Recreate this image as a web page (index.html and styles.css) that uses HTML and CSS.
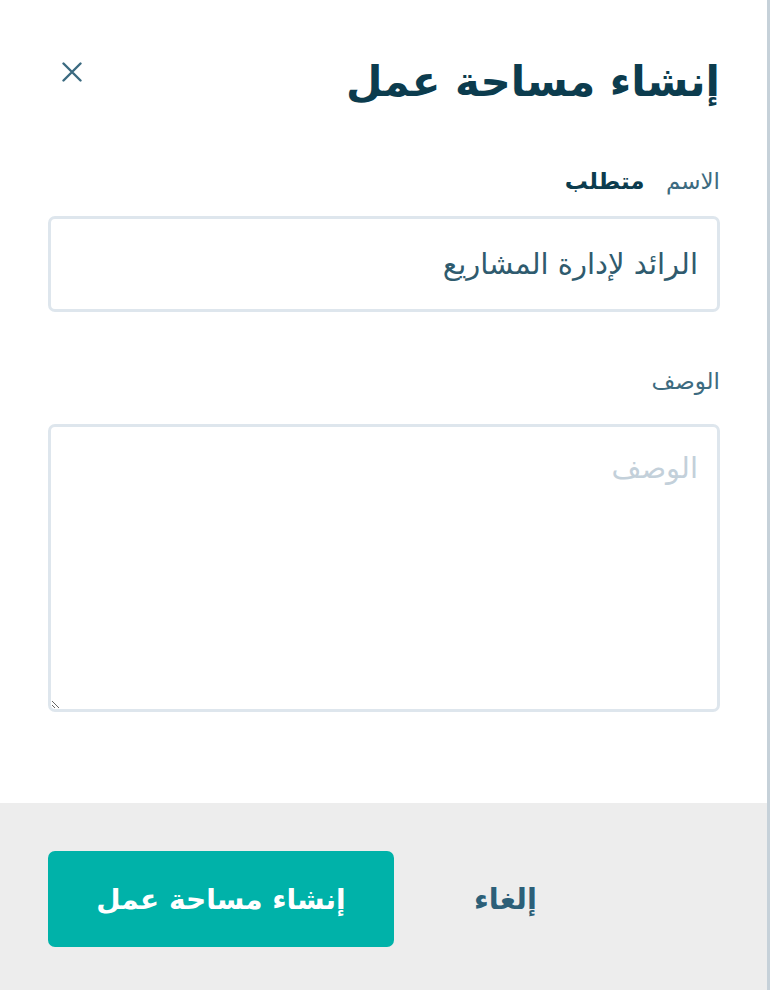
FILE: index.html
```html
<!DOCTYPE html>
<html lang="ar">
<head>
    <meta charset="UTF-8">
    <meta name="viewport" content="width=device-width, initial-scale=1.0">
    <title>إنشاء مساحة عمل</title>
    <link rel="stylesheet" href="styles.css">
</head>
<body>
    <div class="modal" dir="rtl">
        <div class="modal-body">
            <div class="modal-header">
                <h1 class="modal-title">إنشاء مساحة عمل</h1>
                <button class="close-btn" type="button" aria-label="إغلاق">
                    <svg width="20" height="20" viewBox="0 0 20 20">
                        <path d="M1.5 1.5 L18.5 18.5 M18.5 1.5 L1.5 18.5" stroke="#3b6a80" stroke-width="2.4" stroke-linecap="round"/>
                    </svg>
                </button>
            </div>

            <form id="workspaceForm">
                <label for="name" class="field-label">الاسم <span class="required">متطلب</span></label>
                <input type="text" id="name" class="field-input" value="الرائد لإدارة المشاريع">

                <label for="description" class="field-label desc-label">الوصف</label>
                <textarea id="description" class="field-textarea" placeholder="الوصف"></textarea>
            </form>
        </div>

        <div class="modal-footer">
            <button type="button" class="cancel-btn">إلغاء</button>
            <button type="submit" class="submit-btn" form="workspaceForm">إنشاء مساحة عمل</button>
        </div>
    </div>
    <div class="page-edge"></div>
</body>
</html>
```

FILE: styles.css
```css
body {
    margin: 0;
    font-family: "DejaVu Sans", "Noto Sans", sans-serif;
    background-color: #c6d1d9;
    display: flex;
    height: 990px;
    overflow: hidden;
}
.modal {
    width: 767px;
    height: 990px;
    flex-shrink: 0;
    background: #fff;
    display: flex;
    flex-direction: column;
}
.modal-body {
    flex: 1;
    padding: 58px 47px 0 48px;
}
.modal-header {
    display: flex;
    justify-content: space-between;
    align-items: center;
    height: 46px;
    margin-bottom: 64px;
}
.modal-title {
    margin: 0;
    font-size: 42px;
    font-weight: bold;
    color: #0c3c4e;
}
.close-btn {
    background: none;
    border: none;
    padding: 0;
    margin-left: 14px;
    margin-top: -18px;
    cursor: pointer;
    display: flex;
}
.field-label {
    display: block;
    height: 27px;
    font-size: 23px;
    color: #3d6b80;
    margin-bottom: 21px;
}
.required {
    font-weight: bold;
    color: #0c3c4e;
    margin-right: 14px;
}
.field-input,
.field-textarea {
    display: block;
    width: 100%;
    box-sizing: border-box;
    border: 3px solid #dee6ed;
    border-radius: 7px;
    font-family: inherit;
    font-size: 29px;
    color: #2f5b6e;
    padding: 0 19px;
    outline: none;
}
.field-input {
    height: 96px;
}
.desc-label {
    margin-top: 56px;
    margin-bottom: 29px;
}
.field-textarea {
    height: 288px;
    padding-top: 24px;
    resize: vertical;
}
.field-textarea::placeholder {
    color: #c3d0da;
}
.modal-footer {
    height: 187px;
    box-sizing: border-box;
    background-color: #ededed;
    padding: 48px 48px;
    display: flex;
    align-items: flex-start;
    gap: 60px;
}
.cancel-btn {
    margin-right: auto;
    background: none;
    border: none;
    font-family: inherit;
    font-size: 29px;
    font-weight: bold;
    color: #2c5f78;
    height: 96px;
    padding: 0 20px;
    cursor: pointer;
}
.submit-btn {
    width: 346px;
    height: 96px;
    background-color: #00b2a9;
    color: #fff;
    border: none;
    border-radius: 7px;
    font-family: inherit;
    font-size: 28px;
    font-weight: bold;
    cursor: pointer;
}
.page-edge {
    flex: 1;
}
```
